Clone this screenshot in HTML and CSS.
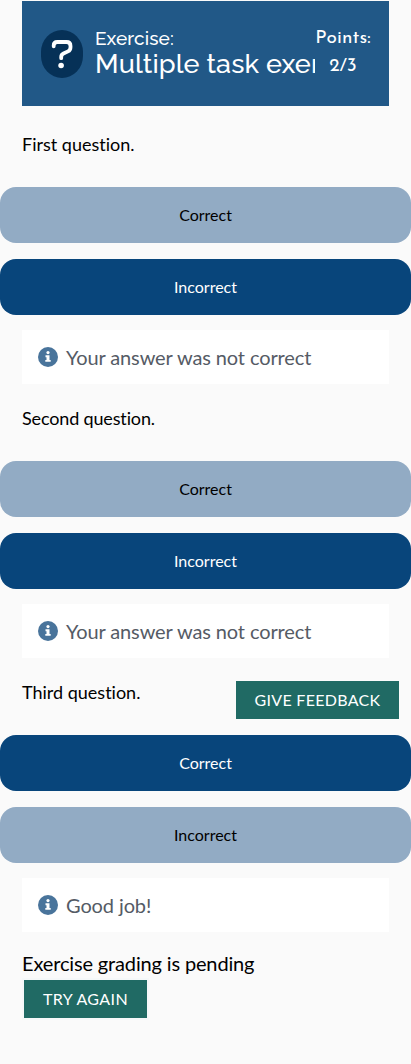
FILE: index.html
```html
<!DOCTYPE html>
<html lang="en">
<head>
<meta charset="utf-8">
<title>Multiple task exercise</title>
<link rel="stylesheet" href="styles.css">
</head>
<body>
<svg class="defs" aria-hidden="true">
  <symbol id="info" viewBox="0 0 20 20">
    <circle cx="10" cy="10" r="10" fill="#49749b"/>
    <circle cx="10" cy="5.6" r="1.6" fill="#fff"/>
    <path d="M7.5 8.3h4v4.6h1.2v1.9H7.3v-1.9h1.2v-2.6h-1z" fill="#fff"/>
  </symbol>
</svg>
<main class="page">
  <header class="header">
    <svg class="badge" viewBox="0 0 42 48">
      <rect width="42" height="48" rx="21" ry="22" fill="#063157"/>
      <path d="M12.7 16.3V15.6Q12.7 12 16.3 12H25.5Q29.5 12 29.5 16V17.2Q29.5 20.2 27 21.4L22.5 23.5Q20.2 24.6 20.2 27V28.2" fill="none" stroke="#fff" stroke-width="3.8" stroke-linecap="round"/>
      <circle cx="20.1" cy="35.5" r="2.8" fill="#fff"/>
    </svg>
    <div class="titles">
      <div class="kicker">Exercise:</div>
      <h1 class="title">Multiple task exercise</h1>
    </div>
    <div class="points"><span class="points-label">Points:</span><span class="score">2/3</span></div>
  </header>

  <section class="task">
    <p class="question">First question.</p>
    <div class="options">
      <button class="option muted">Correct</button>
      <button class="option">Incorrect</button>
    </div>
    <div class="message"><svg class="info"><use href="#info"/></svg><span>Your answer was not correct</span></div>
  </section>
  <section class="task">
    <p class="question tight">Second question.</p>
    <div class="options">
      <button class="option muted">Correct</button>
      <button class="option">Incorrect</button>
    </div>
    <div class="message"><svg class="info"><use href="#info"/></svg><span>Your answer was not correct</span></div>
  </section>
  <section class="task">
    <p class="question">Third question.</p>
    <div class="options">
      <button class="option">Correct</button>
      <button class="option muted">Incorrect</button>
    </div>
    <div class="message"><svg class="info"><use href="#info"/></svg><span>Good job!</span></div>
  </section>

  <footer class="footer">
    <p class="status">Exercise grading is pending</p>
    <button class="action retry">Try again</button>
  </footer>
</main>
<button class="action feedback">Give feedback</button>
</body>
</html>
```
FILE: styles.css
```css
* { box-sizing: border-box; }
body {
  margin: 0;
  min-height: 1064px;
  background: #fafafa;
  color: #000;
  font-family: Lato, "Liberation Sans", sans-serif;
  font-variant-ligatures: none;
}
p, h1 { margin: 0; font-weight: 400; }
button { font: inherit; font-variant-ligatures: none; border: 0; padding: 0; }
.defs { display: none; }
.page { padding-top: 1px; }
.header {
  display: flex;
  height: 105px;
  margin: 0 22px 22px;
  padding: 26px 18px 0 19px;
  background: #215887;
  color: #fff;
  font-family: Raleway, Lato, sans-serif;
}
.badge { flex: none; width: 42px; height: 48px; margin: 3px 12px 0 0; }
.titles { flex: none; width: 220px; overflow: hidden; white-space: nowrap; }
.kicker { font-size: 19px; font-weight: 500; line-height: 22px; letter-spacing: .1px; }
.title { font-size: 27px; font-weight: 500; line-height: 30px; letter-spacing: .1px; }
.points {
  flex: none;
  display: flex;
  flex-direction: column;
  align-items: center;
  width: 56px;
  font-family: "Josefin Sans", Lato, sans-serif;
  font-size: 19px;
  line-height: 28px;
  margin-top: -2px;
}
.points-label { letter-spacing: .1px; }
.task { height: 274px; }
.question { height: 59px; padding: 2px 22px 0; font-size: 18px; line-height: 28px; }
.tight { letter-spacing: -.15px; }
.options { display: flex; flex-direction: column; gap: 16px; }
.option {
  height: 56px;
  padding-bottom: 2px;
  border-radius: 16px;
  background: #08457b;
  color: #fff;
  font-size: 16px;
}
.option.muted { background: #92abc4; color: #000; }
.message {
  display: flex;
  align-items: center;
  gap: 8px;
  height: 54px;
  margin: 15px 22px 0;
  padding: 0 16px;
  background: #fff;
  color: #555b65;
  font-size: 20px;
  letter-spacing: -.11px;
}
.info { width: 20px; height: 20px; }
.footer { padding: 0 22px; }
.status { height: 30px; font-size: 20px; line-height: 26px; letter-spacing: -.15px; }
.action {
  height: 38px;
  padding-bottom: 1px;
  background: #206a64;
  color: #fff;
  font-size: 16px;
  text-transform: uppercase;
}
.retry { display: block; width: 123px; margin: 0 2px; padding-bottom: 2px; letter-spacing: .4px; box-shadow: 0 0 0 2px #f5f8f9; }
.feedback { position: absolute; top: 681px; left: 236px; width: 163px; letter-spacing: .3px; }
```
